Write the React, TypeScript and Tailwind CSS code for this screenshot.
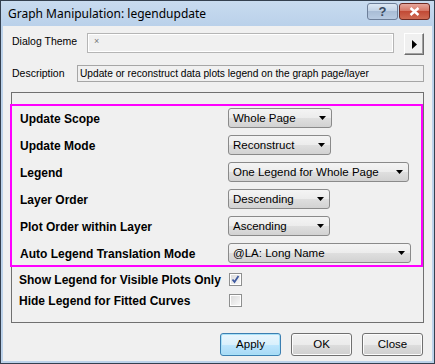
import React from "react";

const sans = "font-['Liberation_Sans',Arial,sans-serif]";

function Combo({ value, width }: { value: string; width: string }) {
  return (
    <div
      className={`${width} h-[20px] flex items-center justify-between pl-[4px] pr-[5px] rounded-[3px] border border-[#8a8a8a] bg-[linear-gradient(#f4f4f4,#ececec_50%,#dfdfdf_50%,#d2d2d2)] text-[11.5px] text-black`}
    >
      <span className="leading-none pt-[1px]">{value}</span>
      <svg width="7" height="4" viewBox="0 0 7 4">
        <path d="M0 0h7L3.5 4z" fill="#000" />
      </svg>
    </div>
  );
}

function Check({ checked }: { checked?: boolean }) {
  return (
    <div className="w-[13px] h-[13px] border border-[#8e8f8f] bg-white p-[1px]">
      <div className="w-full h-full bg-[linear-gradient(135deg,#dcdcdc,#f7f7f7)] flex items-center justify-center">
        {checked && (
          <svg width="9" height="9" viewBox="0 0 9 9">
            <path d="M1.5 4.5 L3.5 7 L7.5 1" stroke="#3f5aa0" strokeWidth="1.8" fill="none" />
          </svg>
        )}
      </div>
    </div>
  );
}

function Btn({ label, focus }: { label: string; focus?: boolean }) {
  return (
    <div
      className={`w-[61px] h-[23px] flex items-center justify-center rounded-[3px] border text-[11.5px] text-black ${
        focus
          ? "border-[#3c7fb1] shadow-[inset_0_0_0_1px_#a8e1f8] bg-[linear-gradient(#eaf6fd,#d9f0fc_50%,#bee6fd_50%,#a7d9f5)]"
          : "border-[#707070] shadow-[inset_0_0_0_1px_#fcfcfc] bg-[linear-gradient(#f2f2f2,#ebebeb_50%,#dddddd_50%,#cfcfcf)]"
      }`}
    >
      {label}
    </div>
  );
}

const rows = [
  { label: "Update Scope", value: "Whole Page", w: "w-[104px]" },
  { label: "Update Mode", value: "Reconstruct", w: "w-[103px]" },
  { label: "Legend", value: "One Legend for Whole Page", w: "w-[181px]" },
  { label: "Layer Order", value: "Descending", w: "w-[102px]" },
  { label: "Plot Order within Layer", value: "Ascending", w: "w-[102px]" },
  { label: "Auto Legend Translation Mode", value: "@LA: Long Name", w: "w-[183px]" },
];

export default function App() {
  return (
    <div className={`w-[435px] h-[364px] ${sans} bg-[#bcd2ea] border border-[#34404f] flex flex-col`}>
      {/* title bar */}
      <div className="h-[25px] flex items-center justify-between pl-[7px] pr-[4px] bg-[linear-gradient(#c8dbef,#bad1ea)]">
        <span className="font-['Noto_Sans',sans-serif] text-[12px] text-black">Graph Manipulation: legendupdate</span>
        <div className="flex gap-[1px] mt-[-4px]">
          <div className="w-[31px] h-[17px] rounded-[3px] border border-[#6d7f99] bg-[linear-gradient(#dde8f4,#bfd0e4_50%,#a9bdd6_50%,#b8cbe2)] flex items-center justify-center text-[13px] font-bold text-[#3b4b63] leading-none">
            ?
          </div>
          <div className="w-[31px] h-[17px] rounded-[3px] border border-[#6e2a22] bg-[linear-gradient(#e7a79c,#d4715f_50%,#c24a36_50%,#cf6a52)] flex items-center justify-center">
            <svg width="11" height="9" viewBox="0 0 11 9">
              <path d="M1.5 1 L9.5 8 M9.5 1 L1.5 8" stroke="#fff" strokeWidth="2.4" />
            </svg>
          </div>
        </div>
      </div>

      {/* client area */}
      <div className="flex-1 mx-[2px] mb-[2px] bg-[#f0f0f0] flex flex-col pl-[8px] pr-[8px] pt-[7px] text-[12px] text-black">
        <div className="flex items-start h-[22px]">
          <span className="w-[76px] pl-[1px] text-[10.5px] leading-[16px] whitespace-nowrap">Dialog Theme</span>
          <div className="w-[307px] h-[20px] border border-[#b5b5b5] shadow-[inset_0_0_0_1px_#ffffff] bg-[#f0f0f0] pl-[6px] text-[9px] text-[#777] leading-[14px]">
            ×
          </div>
          <div className="ml-[10px] w-[20px] h-[22px] bg-[#f0f0f0] border-t border-l border-t-white border-l-white border-b border-r border-b-[#6d6d6d] border-r-[#6d6d6d] shadow-[inset_-1px_-1px_0_#a0a0a0] flex items-center justify-center">
            <svg width="5" height="9" viewBox="0 0 5 9">
              <path d="M0 0 L5 4.5 L0 9z" fill="#000" />
            </svg>
          </div>
        </div>

        <div className="flex items-center mt-[10px] h-[17px]">
          <span className="w-[66px] pl-[1px] text-[10.5px]">Description</span>
          <div className="w-[347px] h-[17px] border border-[#a6a6a6] bg-[#f0f0f0] pl-[2px] text-[10.2px] leading-[15px] whitespace-nowrap">
            Update or reconstruct data plots legend on the graph page/layer
          </div>
        </div>

        {/* group box */}
        <div className="mt-[10px] w-[413px] h-[231px] border border-[#707070] pt-[11px]">
          <div className="-ml-[2px] w-[413px] h-[163px] border-2 border-[#ff00ff] pl-[8px] pt-[2px] flex flex-col gap-[7px]">
            {rows.map((r) => (
              <div key={r.label} className="flex items-center h-[20px]">
                <span className="w-[208px] font-bold text-[12px] text-black pt-[2px]">{r.label}</span>
                <Combo value={r.value} width={r.w} />
              </div>
            ))}
          </div>
          <div className="pl-[7px] mt-[6px] flex flex-col gap-[8px]">
            <div className="flex items-center h-[13px]">
              <span className="w-[210px] font-bold">Show Legend for Visible Plots Only</span>
              <Check checked />
            </div>
            <div className="flex items-center h-[13px]">
              <span className="w-[210px] font-bold">Hide Legend for Fitted Curves</span>
              <Check />
            </div>
          </div>
        </div>

        <div className="mt-[10px] flex justify-end gap-[10px] pr-[1px]">
          <Btn label="Apply" focus />
          <Btn label="OK" />
          <Btn label="Close" />
        </div>
      </div>
    </div>
  );
}
